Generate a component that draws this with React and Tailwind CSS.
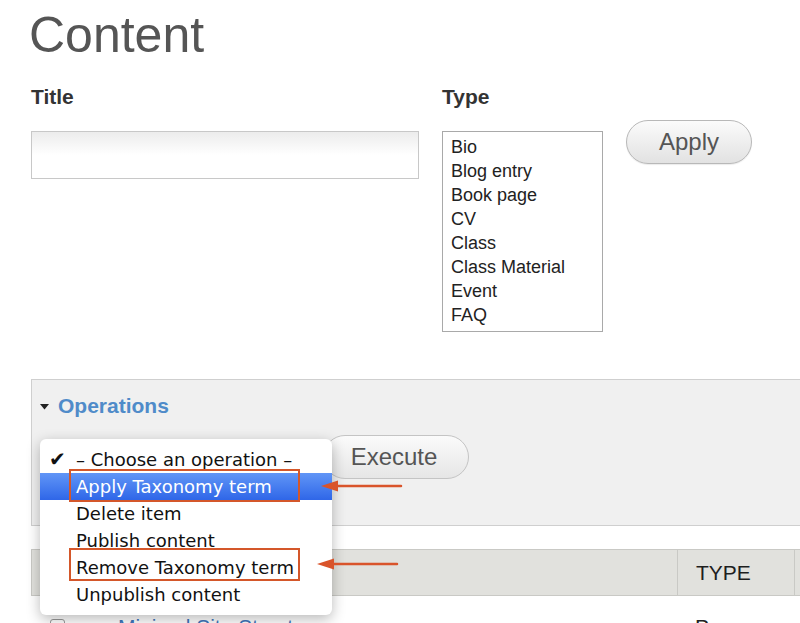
import React from "react";

const types = ["Bio", "Blog entry", "Book page", "CV", "Class", "Class Material", "Event", "FAQ"];

const operations = [
  { label: "– Choose an operation –", checked: true },
  { label: "Apply Taxonomy term", active: true },
  { label: "Delete item" },
  { label: "Publish content" },
  { label: "Remove Taxonomy term" },
  { label: "Unpublish content" },
];

const Arrow = ({ className }) => (
  <svg className={className} width="84" height="14" viewBox="0 0 84 14">
    <line x1="12" y1="7" x2="80" y2="7" stroke="#d9542b" strokeWidth="2.5" strokeLinecap="round" />
    <polygon points="0,7 17,1.5 17,12.5" fill="#d9542b" />
  </svg>
);

const App = () => {
  return (
    <div className="relative w-[800px] h-[623px] overflow-hidden bg-white font-['Liberation_Sans',Arial,sans-serif]">
      <div className="pl-[31px] pt-[10px]">
        <h1 className="-ml-[2px] text-[50px] leading-[50px] text-[#555]">Content</h1>

        {/* filters */}
        <div className="mt-[27px] flex items-start">
          <div className="w-[388px]">
            <div className="text-[21px] leading-[20px] font-bold text-[#333]">Title</div>
            <div className="mt-[24px] h-[48px] border border-[#c8c8c8] bg-gradient-to-b from-[#ececec] via-white to-white" />
          </div>
          <div className="ml-[23px] w-[161px]">
            <div className="text-[21px] leading-[20px] font-bold text-[#333]">Type</div>
            <div className="mt-[24px] h-[201px] overflow-hidden border border-[#a9a9a9] bg-white pt-[3px] pl-[8px]">
              {types.map((t) => (
                <div key={t} className="text-[18px] leading-[24px] text-[#222]">
                  {t}
                </div>
              ))}
            </div>
          </div>
          <button className="ml-[23px] mt-[33px] h-[44px] w-[126px] rounded-full border border-[#b8b8b8] bg-gradient-to-b from-[#fbfbfb] to-[#e2e2e2] text-[24px] text-[#555] shadow-[0_1px_1px_rgba(0,0,0,0.08)]">
            Apply
          </button>
        </div>

        {/* operations fieldset */}
        <div className="mt-[47px] h-[147px] w-[800px] border border-[#cfcfcf] bg-[#f0f0f0] pl-[8px] pt-[16px]">
          <div className="flex items-center">
            <svg width="9" height="6" viewBox="0 0 9 6" className="mt-[2px]">
              <polygon points="0,0 9,0 4.5,5.5" fill="#222" />
            </svg>
            <span className="ml-[9px] text-[21px] leading-[20px] font-bold text-[#4f8bc9]">Operations</span>
          </div>
          <div className="mt-[19px] flex items-center">
            <div className="h-[44px] w-[283px]" />
            <button className="h-[44px] w-[146px] rounded-full border border-[#c4c4c4] bg-gradient-to-b from-[#fbfbfb] to-[#e6e6e6] pr-[4px] text-[24px] text-[#555]">
              Execute
            </button>
          </div>
        </div>

        {/* results table */}
        <div className="mt-[23px] w-[800px]">
          <div className="flex h-[47px] border border-[#c9c9c5] bg-[#e1e1dd]">
            <div className="w-[646px] border-r border-[#c9c9c5]" />
            <div className="flex w-[117px] items-center border-r border-[#c9c9c5] pl-[18px] text-[21px] text-[#1e1e1e]">
              TYPE
            </div>
            <div className="flex-1" />
          </div>
          <div className="flex h-[40px] items-start pt-[20px]">
            <div className="flex w-[647px] items-start">
              <div className="ml-[19px] mt-[3px] h-[15px] w-[15px] rounded-[3px] border border-[#999] bg-white" />
              <a className="ml-[53px] text-[21px] leading-[21px] text-[#3f77bd] underline">Minimal Site Structure</a>
            </div>
            <span className="pl-[17px] text-[21px] leading-[21px] text-[#222]">Page</span>
          </div>
        </div>
      </div>

      {/* open select menu */}
      <div className="absolute left-[40px] top-[439px] w-[292px] rounded-[6px] bg-white py-[7px] shadow-[0_4px_14px_rgba(0,0,0,0.28)] font-['DejaVu_Sans',sans-serif]">
        {operations.map((op) => (
          <div
            key={op.label}
            className={
              op.active
                ? "flex h-[27px] items-center bg-gradient-to-b from-[#6195f6] to-[#2f66e8] text-white"
                : "flex h-[27px] items-center text-[#111]"
            }
          >
            <span className="w-[36px] pl-[9px] text-[20px] leading-[27px]">{op.checked ? "✔" : ""}</span>
            <span className="text-[18px] leading-[27px]">{op.label}</span>
          </div>
        ))}
      </div>

      {/* annotations */}
      <div className="absolute left-[69px] top-[469px] h-[33px] w-[231px] border-2 border-[#d4572a]" />
      <div className="absolute left-[69px] top-[548px] h-[33px] w-[231px] border-2 border-[#d4572a]" />
      <Arrow className="absolute left-[321px] top-[479px]" />
      <Arrow className="absolute left-[317px] top-[557px]" />
    </div>
  );
};

export default App;
